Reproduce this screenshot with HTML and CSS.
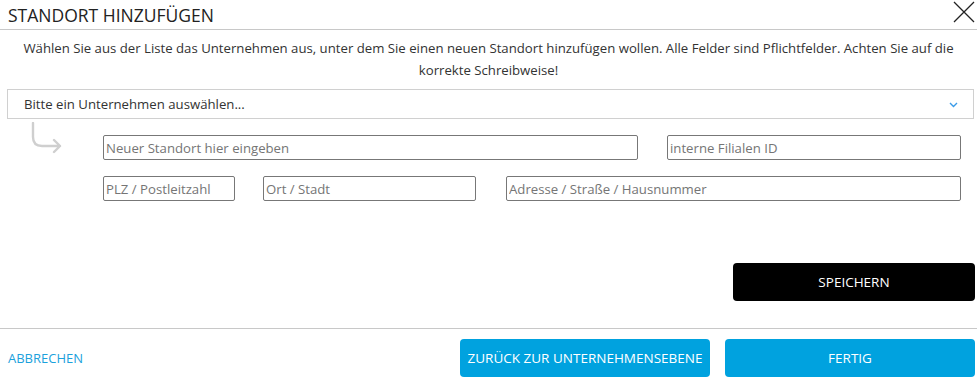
FILE: index.html
```html
<!DOCTYPE html>
<html lang="de">
<head>
<meta charset="utf-8">
<link rel="stylesheet" href="styles.css">
</head>
<body>
<div class="dialog">
  <header class="header">
    <h1 class="title">STANDORT HINZUFÜGEN</h1>
    <button class="close" aria-label="Schließen">
      <svg width="22" height="22" viewBox="0 0 22 22"><path d="M1 1 L21 21 M21 1 L1 21" stroke="#222" stroke-width="1.3" fill="none"/></svg>
    </button>
  </header>
  <p class="intro">Wählen Sie aus der Liste das Unternehmen aus, unter dem Sie einen neuen Standort hinzufügen wollen. Alle Felder sind Pflichtfelder. Achten Sie auf die korrekte Schreibweise!</p>
  <div class="select">
    <span>Bitte ein Unternehmen auswählen...</span>
    <svg class="chev" width="9" height="6" viewBox="0 0 9 6"><path d="M1 1 L4.5 4.5 L8 1" stroke="#3a9be8" stroke-width="1.4" fill="none"/></svg>
  </div>
  <div class="form-area">
    <svg class="arrow" width="40" height="32" viewBox="0 0 40 32"><path d="M6 1 V15 Q6 24 15 24 H33 M27 18 L33 24 L27 30" stroke="#cfcfcf" stroke-width="2.4" fill="none" stroke-linecap="round" stroke-linejoin="round"/></svg>
    <div class="fields">
      <div class="row">
        <input class="in w-name" placeholder="Neuer Standort hier eingeben">
        <input class="in w-id" placeholder="interne Filialen ID">
      </div>
      <div class="row">
        <input class="in w-plz" placeholder="PLZ / Postleitzahl">
        <input class="in w-ort" placeholder="Ort / Stadt">
        <input class="in w-adr" placeholder="Adresse / Straße / Hausnummer">
      </div>
    </div>
  </div>
  <div class="save-row">
    <button class="btn btn-dark">SPEICHERN</button>
  </div>
  <footer class="footer">
    <a class="cancel" href="#">ABBRECHEN</a>
    <div class="footer-btns">
      <button class="btn btn-blue">ZURÜCK ZUR UNTERNEHMENSEBENE</button>
      <button class="btn btn-blue">FERTIG</button>
    </div>
  </footer>
</div>
</body>
</html>
```
FILE: styles.css
```css
* { box-sizing: border-box; }
body {
  margin: 0;
  font-family: "Open Sans", "Noto Sans", sans-serif;
  color: #333;
  background: #fff;
}
.dialog { width: 977px; height: 380px; }
.header {
  display: flex;
  justify-content: space-between;
  align-items: center;
  height: 30px;
  padding: 0 2px 0 8px;
  border-bottom: 1px solid #c8c8c8;
}
.title {
  margin: 0;
  font-size: 17.5px;
  font-weight: 400;
  color: #222;
  letter-spacing: 0;
}
.close {
  border: 0;
  background: none;
  padding: 0;
  margin-top: -5px;
  width: 22px;
  height: 22px;
}
.intro {
  margin: 0;
  padding: 7px 20px 0;
  text-align: center;
  font-size: 13.2px;
  line-height: 22px;
  color: #333;
}
.select {
  margin: 8px 3px 0 7px;
  height: 30px;
  border: 1px solid #d0d0d0;
  display: flex;
  align-items: center;
  justify-content: space-between;
  padding: 0 15px 0 16px;
  font-size: 13.2px;
  color: #333;
}
.chev { margin-top: 1px; }
.form-area {
  display: flex;
  align-items: flex-start;
}
.arrow {
  margin: 3px 0 0 27px;
  flex: none;
}
.fields {
  margin: 16px 0 0 36px;
  display: flex;
  flex-direction: column;
  gap: 16px;
}
.row { display: flex; }
.in {
  height: 25px;
  border: 1px solid #777;
  border-radius: 2px;
  padding: 0 2px;
  font-family: inherit;
  font-size: 13.2px;
  color: #333;
  outline: none;
}
.in::placeholder { color: #757575; }
.w-name { width: 535px; }
.w-id { width: 294px; margin-left: 29px; }
.w-plz { width: 132px; }
.w-ort { width: 213px; margin-left: 28px; }
.w-adr { width: 455px; margin-left: 30px; }
.save-row {
  display: flex;
  justify-content: flex-end;
  padding: 62px 2px 0 0;
}
.btn {
  height: 38px;
  border: 0;
  border-radius: 4px;
  color: #fff;
  font-family: inherit;
  font-size: 13.5px;
  cursor: pointer;
}
.btn-dark { background: #000; width: 242px; }
.footer {
  margin-top: 27px;
  border-top: 1px solid #c8c8c8;
  display: flex;
  justify-content: space-between;
  align-items: center;
  padding: 10px 2px 0 8px;
}
.cancel {
  color: #1ba1dc;
  text-decoration: none;
  font-size: 13px;
}
.footer-btns { display: flex; gap: 15px; }
.btn-blue { background: #00a2df; width: 250px; }
```
